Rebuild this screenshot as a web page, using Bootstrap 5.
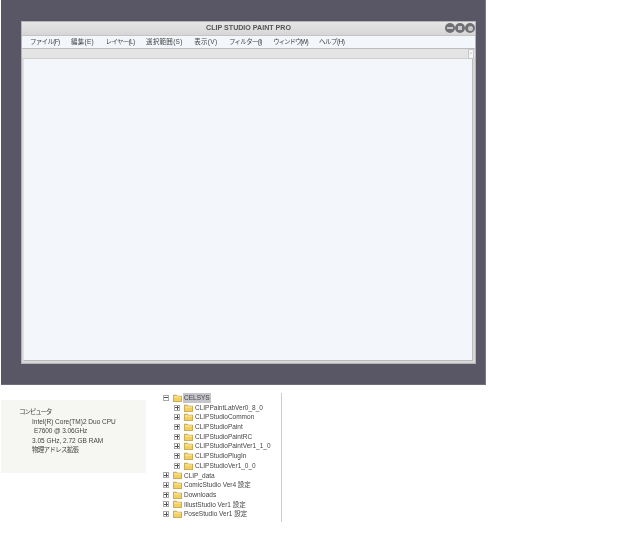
<!DOCTYPE html>
<html lang="ja">
<head>
<meta charset="utf-8">
<title>CLIP STUDIO PAINT PRO</title>
<link href="https://cdn.jsdelivr.net/npm/bootstrap@5.3.0/dist/css/bootstrap.min.css" rel="stylesheet">
<style>
html,body{background:#fff;height:551px;overflow:hidden}
body{font-family:"Liberation Sans","Noto Sans CJK JP",sans-serif;color:#333;filter:blur(.3px)}
.shot-panel{width:485px;height:385px;margin-left:1px;background:#595766;padding:21px 9px 21px 20px;border-right:1px solid #7a7986;border-bottom:1px solid #6f6e7c}
.app-win{height:343px;background:#d8d8d8;border:1px solid #b4b4b4}
.app-title{height:13px;background:linear-gradient(#e6e6e6,#d6d6d6);font-size:7.1px;font-weight:700;color:#555;line-height:13px}
.app-btns{position:absolute;right:0;top:1px}
.app-btn{width:10px;height:10px;border-radius:50%;background:#6f6f74;display:flex;align-items:center;justify-content:center}
.app-btn::after{content:"";display:block;width:6px;height:2px;background:#c9c9c9}
.app-btn.is-mid::after{width:4px;height:4px}
.app-btn.is-close::after{width:5px;height:5px;border-radius:50%}
.app-menu{height:14px;background:#f3f7fc;border-top:1px solid #c4c4c4;border-bottom:1px solid #bdbdbd;font-size:6.5px;line-height:12px;padding-left:8px;gap:11.5px;color:#444}
.kana-a{letter-spacing:-.7px}
.kana-b{letter-spacing:-1.1px}
.kana-c{letter-spacing:-.5px}
.kanji-a{letter-spacing:.3px}
.app-tool{height:10px;background:#e4e4e4;border-bottom:1px solid #d0d0d0}
.app-arrow{width:6px;height:10px;margin-right:1px;background:#f3f6fa;border:1px solid #c6c6c6;color:#888;font-size:5px;line-height:7px;text-align:center}
.app-canvas{background:#f3f7fc;margin:0 2px 2px 1px;border-bottom:1px solid #bcbcbc;border-right:1px solid #bcbcbc;border-left:1px solid #e2e2e2}
.low-row{height:166px}
.info-box{width:145px;height:73px;margin:15px 0 0 1px;background:#f6f6f3;padding:7px 0 0 18px;font-size:6.5px;line-height:9.5px;color:#444}
.info-in{padding-left:13px}
.info-in2{padding-left:15px;letter-spacing:-.1px}
.tree-col{width:119px;height:129px;margin:8px 0 0 17px;border-right:1px solid #ccc;font-size:6.5px;color:#444}
.tree-row{height:9.7px;line-height:9.7px;gap:2px;white-space:nowrap}
.tree-sub{padding-left:11px}
.tree-exp{width:6px;height:6px;border:1px solid #aaa;flex:none;margin-right:2px;background:#fff;position:relative}
.tree-exp::before{content:"";position:absolute;left:0;right:0;top:1.5px;height:1px;background:#555}
.tree-exp.is-closed::after{content:"";position:absolute;top:0;bottom:0;left:1.5px;width:1px;background:#555}
.tree-ico{width:9px;height:8px;flex:none}
.tree-sel{background:#c5c5c9;padding:0 1px;margin-left:-1px}
</style>
</head>
<body>
<svg width="0" height="0" class="position-absolute"><defs><symbol id="fld" viewBox="0 0 9 8"><path d="M.3 1.2h3.2l1 1h4.2v5.5H.3z" fill="#f3cf5e" stroke="#a07c22" stroke-width=".6"/><path d="M1 3h7" stroke="#fff3c0" stroke-width=".8"/></symbol></defs></svg>
<div class="shot-panel">
  <div class="app-win d-flex flex-column">
    <div class="app-title text-center position-relative">CLIP STUDIO PAINT PRO
      <div class="app-btns d-flex">
        <span class="app-btn"></span><span class="app-btn is-mid"></span><span class="app-btn is-close"></span>
      </div>
    </div>
    <div class="app-menu d-flex">
      <span class="kana-a">ファイル(F)</span><span class="kanji-a">編集(E)</span><span class="kana-a">レイヤー(L)</span><span class="kanji-a">選択範囲(S)</span><span class="kanji-a">表示(V)</span><span class="kana-a">フィルター(I)</span><span class="kana-b">ウィンドウ(W)</span><span class="kana-c">ヘルプ(H)</span>
    </div>
    <div class="app-tool d-flex justify-content-end"><span class="app-arrow">▫</span></div>
    <div class="app-canvas flex-grow-1"></div>
  </div>
</div>
<div class="low-row d-flex align-items-start">
  <div class="info-box">
    <div class="kana-b">コンピュータ</div>
    <div class="info-in">Intel(R) Core(TM)2 Duo CPU</div>
    <div class="info-in2">E7600 @ 3.06GHz</div>
    <div class="info-in">3.05 GHz, 2.72 GB RAM</div>
    <div class="info-in kana-a">物理アドレス拡張</div>
  </div>
  <div class="tree-col">
    <div class="tree-row d-flex align-items-center"><span class="tree-exp"></span><svg class="tree-ico"><use href="#fld"/></svg><span class="tree-sel">CELSYS</span></div>
    <div class="tree-sub">
      <div class="tree-row d-flex align-items-center"><span class="tree-exp is-closed"></span><svg class="tree-ico"><use href="#fld"/></svg><span>CLIPPaintLabVer0_8_0</span></div>
      <div class="tree-row d-flex align-items-center"><span class="tree-exp is-closed"></span><svg class="tree-ico"><use href="#fld"/></svg><span>CLIPStudioCommon</span></div>
      <div class="tree-row d-flex align-items-center"><span class="tree-exp is-closed"></span><svg class="tree-ico"><use href="#fld"/></svg><span>CLIPStudioPaint</span></div>
      <div class="tree-row d-flex align-items-center"><span class="tree-exp is-closed"></span><svg class="tree-ico"><use href="#fld"/></svg><span>CLIPStudioPaintRC</span></div>
      <div class="tree-row d-flex align-items-center"><span class="tree-exp is-closed"></span><svg class="tree-ico"><use href="#fld"/></svg><span>CLIPStudioPaintVer1_1_0</span></div>
      <div class="tree-row d-flex align-items-center"><span class="tree-exp is-closed"></span><svg class="tree-ico"><use href="#fld"/></svg><span>CLIPStudioPlugIn</span></div>
      <div class="tree-row d-flex align-items-center"><span class="tree-exp is-closed"></span><svg class="tree-ico"><use href="#fld"/></svg><span>CLIPStudioVer1_0_0</span></div>
    </div>
    <div class="tree-row d-flex align-items-center"><span class="tree-exp is-closed"></span><svg class="tree-ico"><use href="#fld"/></svg><span>CLIP_data</span></div>
    <div class="tree-row d-flex align-items-center"><span class="tree-exp is-closed"></span><svg class="tree-ico"><use href="#fld"/></svg><span>ComicStudio Ver4 設定</span></div>
    <div class="tree-row d-flex align-items-center"><span class="tree-exp is-closed"></span><svg class="tree-ico"><use href="#fld"/></svg><span>Downloads</span></div>
    <div class="tree-row d-flex align-items-center"><span class="tree-exp is-closed"></span><svg class="tree-ico"><use href="#fld"/></svg><span>IllustStudio Ver1 設定</span></div>
    <div class="tree-row d-flex align-items-center"><span class="tree-exp is-closed"></span><svg class="tree-ico"><use href="#fld"/></svg><span>PoseStudio Ver1 設定</span></div>
  </div>
</div>
<script src="https://cdn.jsdelivr.net/npm/bootstrap@5.3.0/dist/js/bootstrap.bundle.min.js"></script>
</body>
</html>
